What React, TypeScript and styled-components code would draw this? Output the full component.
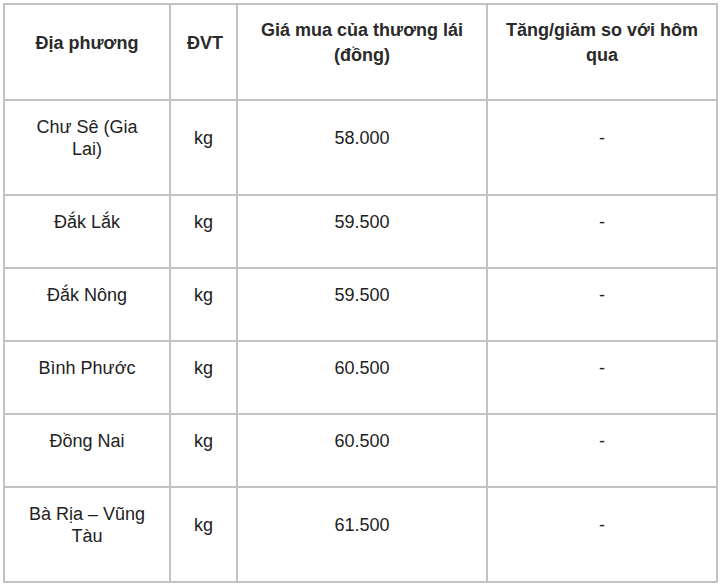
import React from "react";
import styled, { createGlobalStyle } from "styled-components";

const GlobalStyle = createGlobalStyle`
  html, body {
    margin: 0;
    padding: 0;
    background: #ffffff;
  }
  body {
    font-family: "Liberation Sans", Arial, sans-serif;
  }
`;

const Page = styled.div`
  padding: 3px 0 0 3px;
`;

const Table = styled.table`
  width: 713px;
  border-collapse: collapse;
  table-layout: fixed;
  font-family: "Liberation Sans", Arial, sans-serif;
  font-size: 18px;
  line-height: 22px;
  color: #222222;
`;

const HeadCell = styled.th`
  border: 2px solid #c2c2c2;
  padding: 13px 16px 31px;
  line-height: 25px;
  font-weight: 700;
  text-align: center;
  vertical-align: middle;
  color: #2a2a2a;
`;

const Cell = styled.td`
  border: 2px solid #c2c2c2;
  padding: 15px 16px 34px;
  line-height: 22px;
  text-align: center;
  vertical-align: middle;
`;

type Row = { place: string; unit: string; price: string; change: string };

const rows: Row[] = [
  { place: "Chư Sê (Gia Lai)", unit: "kg", price: "58.000", change: "-" },
  { place: "Đắk Lắk", unit: "kg", price: "59.500", change: "-" },
  { place: "Đắk Nông", unit: "kg", price: "59.500", change: "-" },
  { place: "Bình Phước", unit: "kg", price: "60.500", change: "-" },
  { place: "Đồng Nai", unit: "kg", price: "60.500", change: "-" },
  { place: "Bà Rịa – Vũng Tàu", unit: "kg", price: "61.500", change: "-" },
];

export default function App() {
  return (
    <>
      <GlobalStyle />
      <Page>
        <Table>
          <colgroup>
            <col style={{ width: "166px" }} />
            <col style={{ width: "67px" }} />
            <col style={{ width: "250px" }} />
            <col style={{ width: "230px" }} />
          </colgroup>
          <thead>
            <tr>
              <HeadCell>Địa phương</HeadCell>
              <HeadCell>ĐVT</HeadCell>
              <HeadCell>Giá mua của thương lái (đồng)</HeadCell>
              <HeadCell>Tăng/giảm so với hôm qua</HeadCell>
            </tr>
          </thead>
          <tbody>
            {rows.map((r) => (
              <tr key={r.place}>
                <Cell>{r.place}</Cell>
                <Cell>{r.unit}</Cell>
                <Cell>{r.price}</Cell>
                <Cell>{r.change}</Cell>
              </tr>
            ))}
          </tbody>
        </Table>
      </Page>
    </>
  );
}
